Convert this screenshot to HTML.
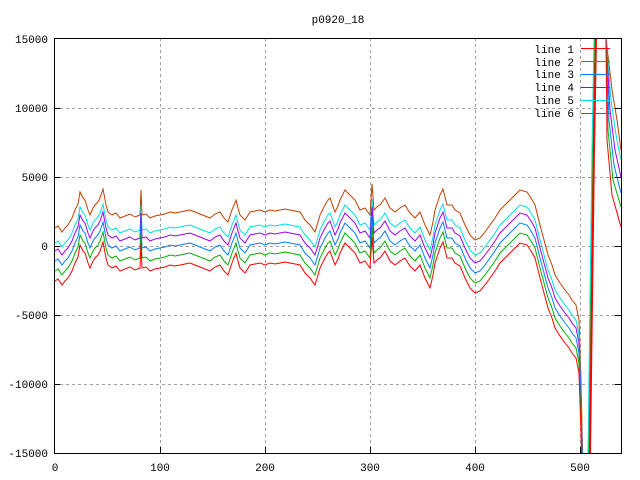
<!DOCTYPE html>
<html><head><style>
html,body{margin:0;background:#fff;overflow:hidden;width:640px;height:480px}
svg{display:block;font-family:"Liberation Mono","DejaVu Sans Mono",monospace;font-size:11px}
</style></head><body>
<svg width="640" height="480" viewBox="0 0 640 480">
<defs>
<clipPath id="c"><rect x="54" y="38" width="567" height="415"/></clipPath>
<path id="b" d="M55,228 L58,226 L62,232 L65,228 L68,225 L72,218 L75,210 L78,204 L80,192 L83,198 L85,200 L88,210 L90,215 L93,208 L95,205 L98,202 L100,198 L103,189 L106,205 L108,212 L112,215 L116,213 L120,218 L125,216 L130,214 L135,217 L140,215 L141,190 L142,215 L146,214 L150,218 L155,216 L160,215 L165,214 L170,212 L175,213 L180,212 L185,211 L190,210 L195,212 L200,214 L205,216 L210,218 L215,214 L220,212 L224,218 L228,222 L232,210 L236,200 L238,208 L240,215 L245,220 L250,212 L255,211 L260,210 L265,212 L270,210 L275,211 L280,210 L285,209 L290,210 L295,211 L300,212 L305,220 L310,225 L315,232 L318,222 L320,215 L325,205 L328,200 L330,198 L335,212 L338,206 L340,200 L345,190 L350,195 L355,200 L358,206 L360,210 L365,208 L370,215 L372,184 L374,210 L378,206 L380,205 L385,198 L388,204 L390,208 L395,212 L400,208 L405,205 L408,210 L410,213 L415,218 L420,212 L425,225 L430,235 L433,222 L435,210 L440,195 L443,189 L447,205 L452,205 L455,210 L460,213 L465,225 L470,235 L475,240 L480,238 L485,232 L490,225 L495,218 L500,210 L505,205 L510,200 L515,195 L520,190 L527,192 L531,198 L535,205 L540,225 L544,240 L548,255 L552,265 L555,275 L560,283 L565,290 L569,295 L572,300 L576,305 L579,320 L581,380 L583,470"/>
</defs>
<g stroke="#a0a0a0" stroke-dasharray="3,3" stroke-width="1">
<line x1="160.5" y1="38" x2="160.5" y2="453"/><line x1="265.5" y1="38" x2="265.5" y2="453"/><line x1="370.5" y1="38" x2="370.5" y2="453"/><line x1="475.5" y1="38" x2="475.5" y2="453"/><line x1="580.5" y1="38" x2="580.5" y2="453"/>
<line x1="54" y1="108.5" x2="621" y2="108.5"/><line x1="54" y1="177.5" x2="621" y2="177.5"/><line x1="54" y1="246.5" x2="621" y2="246.5"/><line x1="54" y1="315.5" x2="621" y2="315.5"/><line x1="54" y1="384.5" x2="621" y2="384.5"/>
</g>
<g clip-path="url(#c)" fill="none" stroke-width="1">
<use href="#b" stroke="#c04000" transform="translate(0,0)"/>
<use href="#b" stroke="#00e0e0" transform="translate(0,15)"/>
<use href="#b" stroke="#a000f0" transform="translate(0,23)"/>
<use href="#b" stroke="#0080ff" transform="translate(0,33)"/>
<use href="#b" stroke="#00b000" transform="translate(0,43)"/>
<use href="#b" stroke="#ff0000" transform="translate(0,53)"/>
<path d="M588,453 L590,300 L592,150 L594,38" stroke="#00e0e0"/>
<path d="M589,453 L591,300 L593,150 L595,38" stroke="#00b000"/>
<path d="M590,453 L592,300 L594,150 L596,38" stroke="#ff0000" stroke-width="2"/>
<path d="M606,38 L612,90 L617,120 L621,150" stroke="#c04000"/>
<path d="M606,38 L611,100 L616,135 L621,160" stroke="#00e0e0"/>
<path d="M606,38 L610,110 L615,150 L621,177" stroke="#a000f0"/>
<path d="M606,38 L609,120 L614,165 L621,193" stroke="#0080ff"/>
<path d="M606,38 L608,130 L613,180 L621,207" stroke="#00b000"/>
<path d="M606,38 L607,140 L612,195 L621,227" stroke="#ff0000"/>
</g>
<rect x="54.5" y="38.5" width="567" height="415" fill="none" stroke="#000"/>
<g stroke="#000">
<line x1="160.5" y1="453" x2="160.5" y2="447"/><line x1="265.5" y1="453" x2="265.5" y2="447"/><line x1="370.5" y1="453" x2="370.5" y2="447"/><line x1="475.5" y1="453" x2="475.5" y2="447"/><line x1="580.5" y1="453" x2="580.5" y2="447"/>
<line x1="54" y1="108.5" x2="60" y2="108.5"/><line x1="54" y1="177.5" x2="60" y2="177.5"/><line x1="54" y1="246.5" x2="60" y2="246.5"/><line x1="54" y1="315.5" x2="60" y2="315.5"/><line x1="54" y1="384.5" x2="60" y2="384.5"/>
<line x1="621" y1="108.5" x2="615" y2="108.5"/><line x1="621" y1="177.5" x2="615" y2="177.5"/><line x1="621" y1="246.5" x2="615" y2="246.5"/><line x1="621" y1="315.5" x2="615" y2="315.5"/><line x1="621" y1="384.5" x2="615" y2="384.5"/>
</g>
<g text-anchor="end">
<text x="48" y="43">15000</text><text x="48" y="112">10000</text><text x="48" y="181">5000</text><text x="48" y="250">0</text><text x="48" y="319">-5000</text><text x="48" y="388">-10000</text><text x="48" y="457">-15000</text>
</g>
<g text-anchor="middle">
<text x="55" y="471">0</text><text x="160" y="471">100</text><text x="265" y="471">200</text><text x="370" y="471">300</text><text x="475" y="471">400</text><text x="580" y="471">500</text>
<text x="338" y="23">p0920_18</text>
</g>
<g text-anchor="end">
<text x="574" y="53">line 1</text><text x="574" y="66">line 2</text><text x="574" y="78">line 3</text><text x="574" y="91">line 4</text><text x="574" y="104">line 5</text><text x="574" y="117">line 6</text>
</g>
<g stroke-width="1">
<line x1="581" y1="48.5" x2="610" y2="48.5" stroke="#ff0000"/>
<line x1="581" y1="61.5" x2="610" y2="61.5" stroke="#00b000"/>
<line x1="581" y1="74.5" x2="610" y2="74.5" stroke="#0080ff"/>
<line x1="581" y1="87.5" x2="610" y2="87.5" stroke="#a000f0"/>
<line x1="581" y1="100.5" x2="610" y2="100.5" stroke="#00e0e0"/>
<line x1="581" y1="113.5" x2="610" y2="113.5" stroke="#c04000"/>
</g>
</svg>
</body></html>
